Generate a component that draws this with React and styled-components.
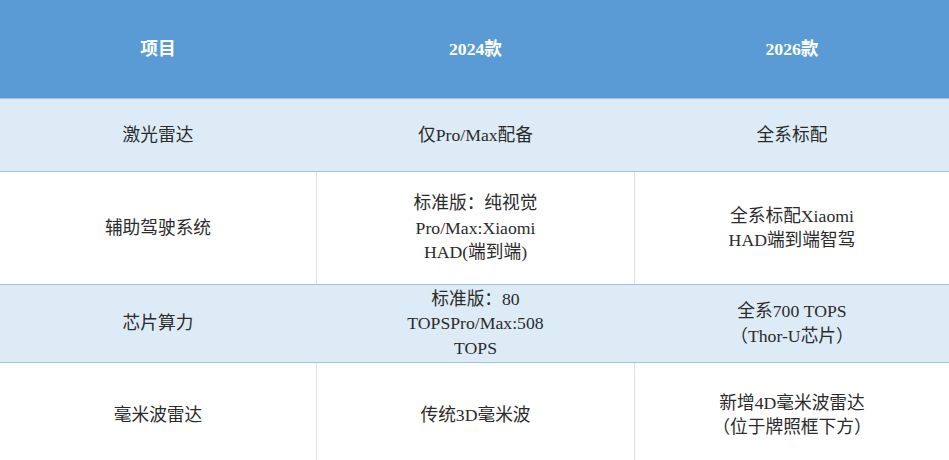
import { createGlobalStyle, styled } from "styled-components";

const GlobalStyle = createGlobalStyle`
  html, body {
    margin: 0;
    padding: 0;
    background: #ffffff;
  }
  body {
    font-family: "Liberation Serif", "Noto Sans CJK SC", serif;
  }
`;

// the table is just a column of grid rows
const Table = styled.div`
  display: flex;
  flex-direction: column;
  width: 949px;
`;

const Row = styled.div`
  display: grid;
  grid-template-columns: 316px 318px 1fr;
  height: ${({ $h }) => $h}px;
  background: ${({ $tone }) =>
    $tone === "head" ? "#5b9bd5" : $tone === "tint" ? "#ddebf7" : "#ffffff"};
  border-bottom: 1px solid #9dc3e6;
`;

const Cell = styled.div`
  display: flex;
  flex-direction: column;
  align-items: center;
  justify-content: center;
  text-align: center;
  font-size: 17.7px;
  line-height: 24.5px;
  color: ${({ $head }) => ($head ? "#ffffff" : "#2b2b2b")};
  font-weight: ${({ $head }) => ($head ? 700 : 400)};
  border-left: 1px solid
    ${({ $divider }) => ($divider ? "#e2e2e2" : "transparent")};
  white-space: nowrap;

  &:first-child {
    border-left: none;
  }
`;

const rows = [
  { tone: "tint", h: 72, cells: [["激光雷达"], ["仅Pro/Max配备"], ["全系标配"]] },
  {
    tone: "white",
    h: 112,
    cells: [
      ["辅助驾驶系统"],
      ["标准版：纯视觉", "Pro/Max:Xiaomi", "HAD(端到端)"],
      ["全系标配Xiaomi", "HAD端到端智驾"],
    ],
  },
  {
    tone: "tint",
    h: 77,
    cells: [
      ["芯片算力"],
      ["标准版：80", "TOPSPro/Max:508", "TOPS"],
      ["全系700 TOPS", "（Thor-U芯片）"],
    ],
  },
  {
    tone: "white",
    h: 104,
    cells: [["毫米波雷达"], ["传统3D毫米波"], ["新增4D毫米波雷达", "（位于牌照框下方）"]],
  },
];

export default function App() {
  return (
    <>
      <GlobalStyle />
      <Table>
        <Row $tone="head" $h={98}>
          <Cell $head>项目</Cell>
          <Cell $head>2024款</Cell>
          <Cell $head>2026款</Cell>
        </Row>
        {rows.map((row, i) => (
          <Row key={i} $tone={row.tone} $h={row.h}>
            {row.cells.map((lines, j) => (
              <Cell key={j} $divider={row.tone === "white"}>
                {lines.map((line, k) => (
                  <span key={k}>{line}</span>
                ))}
              </Cell>
            ))}
          </Row>
        ))}
      </Table>
    </>
  );
}
